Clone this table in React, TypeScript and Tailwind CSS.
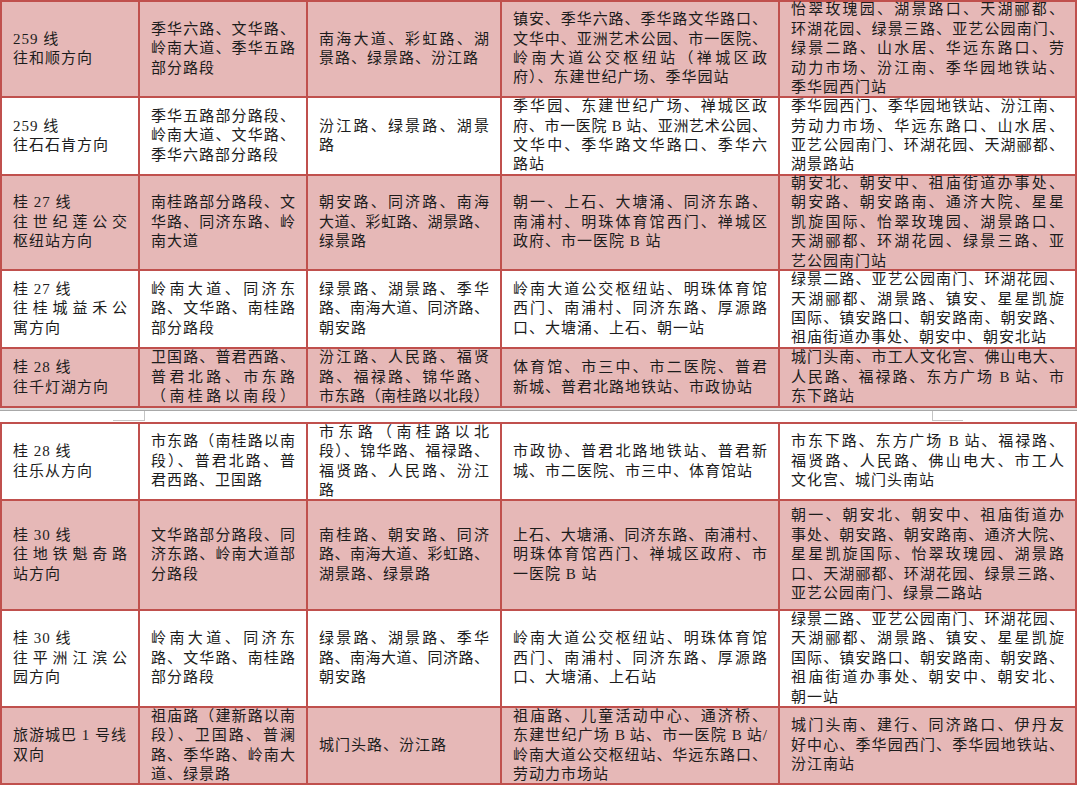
import clsx from "clsx";

type Row = { pink: boolean; cells: string[] };

// "\n" starts a new paragraph, "|" is a wrapped line (justified)
const table1: Row[] = [
  {
    pink: true,
    cells: [
      "259 线\n往和顺方向",
      "季华六路、文华路、|岭南大道、季华五路|部分路段",
      "南海大道、彩虹路、湖|景路、绿景路、汾江路",
      "镇安、季华六路、季华路文华路口、|文华中、亚洲艺术公园、市一医院、|岭南大道公交枢纽站（禅城区政|府）、东建世纪广场、季华园站",
      "怡翠玫瑰园、湖景路口、天湖郦都、|环湖花园、绿景三路、亚艺公园南门、|绿景二路、山水居、华远东路口、劳|动力市场、汾江南、季华园地铁站、|季华园西门站",
    ],
  },
  {
    pink: false,
    cells: [
      "259 线\n往石石肯方向",
      "季华五路部分路段、|岭南大道、文华路、|季华六路部分路段",
      "汾江路、绿景路、湖景|路",
      "季华园、东建世纪广场、禅城区政|府、市一医院 B 站、亚洲艺术公园、|文华中、季华路文华路口、季华六|路站",
      "季华园西门、季华园地铁站、汾江南、|劳动力市场、华远东路口、山水居、|亚艺公园南门、环湖花园、天湖郦都、|湖景路站",
    ],
  },
  {
    pink: true,
    cells: [
      "桂 27 线\n往世纪莲公交|枢纽站方向",
      "南桂路部分路段、文|华路、同济东路、岭|南大道",
      "朝安路、同济路、南海|大道、彩虹路、湖景路、|绿景路",
      "朝一、上石、大塘涌、同济东路、|南浦村、明珠体育馆西门、禅城区|政府、市一医院 B 站",
      "朝安北、朝安中、祖庙街道办事处、|朝安路、朝安路南、通济大院、星星|凯旋国际、怡翠玫瑰园、湖景路口、|天湖郦都、环湖花园、绿景三路、亚|艺公园南门站",
    ],
  },
  {
    pink: false,
    cells: [
      "桂 27 线\n往桂城益禾公|寓方向",
      "岭南大道、同济东|路、文华路、南桂路|部分路段",
      "绿景路、湖景路、季华|路、南海大道、同济路、|朝安路",
      "岭南大道公交枢纽站、明珠体育馆|西门、南浦村、同济东路、厚源路|口、大塘涌、上石、朝一站",
      "绿景二路、亚艺公园南门、环湖花园、|天湖郦都、湖景路、镇安、星星凯旋|国际、镇安路口、朝安路南、朝安路、|祖庙街道办事处、朝安中、朝安北站",
    ],
  },
  {
    pink: true,
    cells: [
      "桂 28 线\n往千灯湖方向",
      "卫国路、普君西路、|普君北路、市东路|（南桂路以南段）|",
      "汾江路、人民路、福贤|路、福禄路、锦华路、|市东路（南桂路以北段）|",
      "体育馆、市三中、市二医院、普君|新城、普君北路地铁站、市政协站",
      "城门头南、市工人文化宫、佛山电大、|人民路、福禄路、东方广场 B 站、市|东下路站",
    ],
  },
];

const table2: Row[] = [
  {
    pink: false,
    cells: [
      "桂 28 线\n往乐从方向",
      "市东路（南桂路以南|段）、普君北路、普|君西路、卫国路",
      "市东路（南桂路以北|段）、锦华路、福禄路、|福贤路、人民路、汾江|路",
      "市政协、普君北路地铁站、普君新|城、市二医院、市三中、体育馆站",
      "市东下路、东方广场 B 站、福禄路、|福贤路、人民路、佛山电大、市工人|文化宫、城门头南站",
    ],
  },
  {
    pink: true,
    cells: [
      "桂 30 线\n往地铁魁奇路|站方向",
      "文华路部分路段、同|济东路、岭南大道部|分路段",
      "南桂路、朝安路、同济|路、南海大道、彩虹路、|湖景路、绿景路",
      "上石、大塘涌、同济东路、南浦村、|明珠体育馆西门、禅城区政府、市|一医院 B 站",
      "朝一、朝安北、朝安中、祖庙街道办|事处、朝安路、朝安路南、通济大院、|星星凯旋国际、怡翠玫瑰园、湖景路|口、天湖郦都、环湖花园、绿景三路、|亚艺公园南门、绿景二路站",
    ],
  },
  {
    pink: false,
    cells: [
      "桂 30 线\n往平洲江滨公|园方向",
      "岭南大道、同济东|路、文华路、南桂路|部分路段",
      "绿景路、湖景路、季华|路、南海大道、同济路、|朝安路",
      "岭南大道公交枢纽站、明珠体育馆|西门、南浦村、同济东路、厚源路|口、大塘涌、上石站",
      "绿景二路、亚艺公园南门、环湖花园、|天湖郦都、湖景路、镇安、星星凯旋|国际、镇安路口、朝安路南、朝安路、|祖庙街道办事处、朝安中、朝安北、|朝一站",
    ],
  },
  {
    pink: true,
    cells: [
      "旅游城巴 1 号线\n双向",
      "祖庙路（建新路以南|段）、卫国路、普澜|路、季华路、岭南大|道、绿景路",
      "城门头路、汾江路",
      "祖庙路、儿童活动中心、通济桥、|东建世纪广场 B 站、市一医院 B 站/|岭南大道公交枢纽站、华远东路口、|劳动力市场站",
      "城门头南、建行、同济路口、伊丹友|好中心、季华园西门、季华园地铁站、|汾江南站",
    ],
  },
];

function Cell({ text, pink }: { text: string; pink: boolean }) {
  const paras = text.split("\n");
  return (
    <div
      className={clsx(
        "flex flex-col justify-center px-[11px] overflow-visible",
        pink ? "bg-[#e6b8b7]" : "bg-white"
      )}
    >
      {paras.map((p, i) => {
        const justifyAll = p.endsWith("|");
        const lines = (justifyAll ? p.slice(0, -1) : p).split("|");
        return lines.map((l, j) => (
          <div
            key={`${i}-${j}`}
            className={
              j < lines.length - 1 || justifyAll
                ? "text-justify [text-align-last:justify]"
                : "tracking-[1px]"
            }
          >
            {l}
          </div>
        ));
      })}
    </div>
  );
}

function Table({ rows, rowsClass }: { rows: Row[]; rowsClass: string }) {
  return (
    <div
      className={clsx(
        "grid w-[1077px] grid-cols-[136px_166px_192px_276px_295px] gap-[2px] bg-[#c0504d] p-[2px]",
        rowsClass
      )}
    >
      {rows.map((row, i) =>
        row.cells.map((c, j) => <Cell key={`${i}-${j}`} text={c} pink={row.pink} />)
      )}
    </div>
  );
}

export default function App() {
  return (
    <div className="h-[786px] w-[1080px] overflow-hidden bg-white font-['Liberation_Serif','Noto_Sans_CJK_SC',serif] text-[15px] leading-[19.4px] text-[#1c1c1c]">
      <Table rows={table1} rowsClass="grid-rows-[94px_76px_93px_76px_57px]" />

      {/* page break */}
      <div className="h-[14px] w-[1077px]">
        <div className="h-[2px] bg-[#dcdcdc]" />
        <div className="h-[1px] bg-[#a8a8a8]" />
        <div className="flex">
          <div className="ml-[113px] h-[10px] w-[32px] border-r border-b border-[#c4c4c4]" />
          <div className="ml-[787px] h-[10px] w-[31px] border-l border-b border-[#c4c4c4]" />
        </div>
      </div>

      <Table rows={table2} rowsClass="grid-rows-[75px_108px_95px_75px]" />
    </div>
  );
}
